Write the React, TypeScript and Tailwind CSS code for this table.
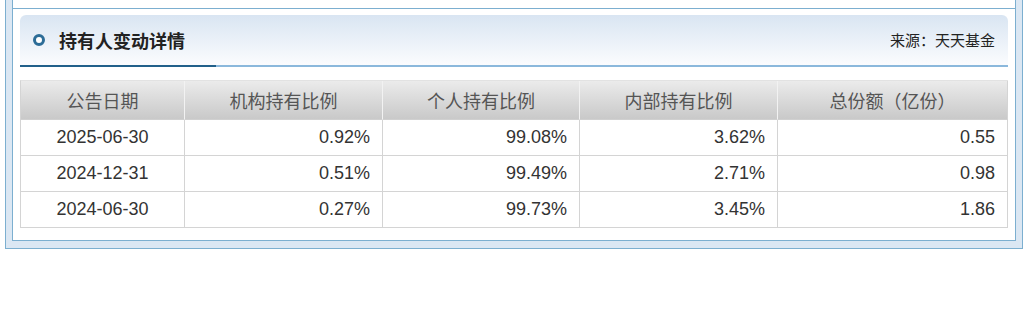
const rows = [
  { date: "2025-06-30", org: "0.92%", person: "99.08%", inner: "3.62%", total: "0.55" },
  { date: "2024-12-31", org: "0.51%", person: "99.49%", inner: "2.71%", total: "0.98" },
  { date: "2024-06-30", org: "0.27%", person: "99.73%", inner: "3.45%", total: "1.86" },
];

const heads = ["公告日期", "机构持有比例", "个人持有比例", "内部持有比例", "总份额（亿份）"];

export default function App() {
  return (
    <div className="w-[1028px] h-[313px] bg-white font-['Liberation_Sans','Noto_Sans_CJK_SC',sans-serif]">
      <div className="ml-[5px] w-[1018px] border-x border-b border-[#7cafd0] bg-[#dbe7f3] px-[6px] pb-[7px]">
        <div className="border-x border-b border-[#7cafd0] bg-white px-[7px] pb-[12px]">
          <div className="h-[9px] -mx-[7px] border-b border-[#7cafd0]" />

          <div className="mt-[6px] flex flex-col">
            <div className="flex h-[50px] items-center justify-between rounded-t-[6px] bg-gradient-to-b from-[#d9e5f2] to-[#fbfcfe] pl-[13px] pr-[13px]">
              <div className="flex items-center">
                <span className="block h-[12px] w-[12px] rounded-full border-[3px] border-[#2c6c97] bg-white" />
                <span className="ml-[14px] text-[18px] font-bold text-[#222] font-['Noto_Sans_CJK_SC',sans-serif]">
                  持有人变动详情
                </span>
              </div>
              <span className="text-[15px] text-[#222] font-['Noto_Sans_CJK_SC',sans-serif]">来源：天天基金</span>
            </div>
            <div className="flex h-[2px]">
              <div className="w-[196px] bg-[#22608a]" />
              <div className="flex-1 bg-[#8bb8dc]" />
            </div>
          </div>

          <div className="mt-[13px] grid grid-cols-[164px_198px_197px_198px_230px] border-l border-t border-l-[#d4d4d4] border-t-[#e2e2e2]">
            {heads.map((h, i) => (
              <div
                key={h}
                className={
                  "flex h-[39px] items-center justify-center border-b border-b-[#d0d0d0] bg-gradient-to-b from-[#ebebeb] to-[#c9c9c9] text-[18px] text-[#555] font-['Noto_Sans_CJK_SC',sans-serif] " +
                  (i === 4 ? "border-r border-r-[#d4d4d4]" : "border-r border-r-[#f2f2f2]")
                }
              >
                {h}
              </div>
            ))}
            {rows.map((r) => (
              <div key={r.date} className="contents text-[18px] text-[#333]">
                <div className="flex h-[36px] items-center justify-center border-b border-r border-[#d4d4d4]">{r.date}</div>
                <div className="flex h-[36px] items-center justify-end border-b border-r border-[#d4d4d4] pr-[12px]">{r.org}</div>
                <div className="flex h-[36px] items-center justify-end border-b border-r border-[#d4d4d4] pr-[12px]">{r.person}</div>
                <div className="flex h-[36px] items-center justify-end border-b border-r border-[#d4d4d4] pr-[12px]">{r.inner}</div>
                <div className="flex h-[36px] items-center justify-end border-b border-r border-[#d4d4d4] pr-[12px]">{r.total}</div>
              </div>
            ))}
          </div>
        </div>
      </div>
    </div>
  );
}
